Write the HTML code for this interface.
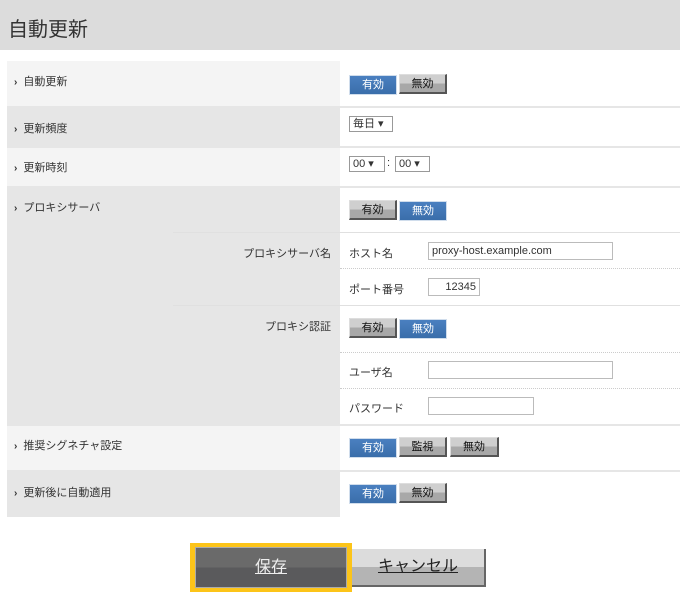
<!DOCTYPE html><html><head><meta charset="utf-8"><style>
*{margin:0;padding:0;box-sizing:border-box}
body{width:680px;height:601px;background:#fff;font-family:"Liberation Sans","Noto Sans CJK JP",sans-serif;font-size:11px;color:#333;position:relative;overflow:hidden}
.a{position:absolute}
.hd{left:0;top:0;width:680px;height:50px;background:#dcdcdc;font-size:20px;color:#333;padding:13px 0 0 8px}
.lt{left:7px;width:333px}
.l1{background:#f4f4f4}.l2{background:#e6e6e6}
.hl{height:2px;background:#e6e6e6;left:7px;width:673px}
.dl{height:0;border-top:1px dotted #ccc;left:340px;width:340px}
.lb{font-size:11px;color:#333}
.lb:before{content:"›";font-weight:bold;margin-right:6px;font-size:10px}
.b{position:absolute;height:20px;width:48px;text-align:center;line-height:19px;font-size:11px}
.bl{background:linear-gradient(#4a80c0,#3a6eaa);color:#fff;border:1px solid #d0ddec}
.bg{background:linear-gradient(#cfcfcf 50%,#a8a8a8 50%);color:#111;border-right:2px solid #555;border-bottom:2px solid #555;border-top:1px solid #ddd;border-left:1px solid #ddd}
.in{position:absolute;height:18px;border:1px solid #bbb;background:#fff;font-size:11px;padding:1px 3px;line-height:14px}
.sel{position:absolute;height:16px;border:1px solid #999;background:#fff;font-size:11px;padding:0 3px;line-height:14px}
.r{text-align:right}
</style></head><body>
<div class="a hd">自動更新</div>
<div class="a lt l1" style="top:61px;height:45px"></div>
<div class="a lt l2" style="top:107px;height:39px"></div>
<div class="a lt l1" style="top:147px;height:39px"></div>
<div class="a lt l2" style="top:187px;height:237px"></div>
<div class="a lt l1" style="top:425px;height:45px"></div>
<div class="a lt l2" style="top:471px;height:46px"></div>
<div class="a hl" style="top:106px"></div>
<div class="a hl" style="top:146px"></div>
<div class="a hl" style="top:186px"></div>
<div class="a hl" style="top:424px"></div>
<div class="a hl" style="top:470px"></div>
<div class="a" style="left:173px;top:232px;width:507px;height:1px;background:#e0e0e0"></div>
<div class="a" style="left:173px;top:305px;width:507px;height:1px;background:#e0e0e0"></div>
<div class="a dl" style="top:268px"></div>
<div class="a dl" style="top:352px"></div>
<div class="a dl" style="top:388px"></div>

<div class="a lb" style="left:14px;top:73px">自動更新</div>
<div class="a lb" style="left:14px;top:120px">更新頻度</div>
<div class="a lb" style="left:14px;top:159px">更新時刻</div>
<div class="a lb" style="left:14px;top:199px">プロキシサーバ</div>
<div class="a lb" style="left:14px;top:437px">推奨シグネチャ設定</div>
<div class="a lb" style="left:14px;top:484px">更新後に自動適用</div>
<div class="a r" style="left:180px;width:151px;top:245px">プロキシサーバ名</div>
<div class="a r" style="left:180px;width:151px;top:318px">プロキシ認証</div>
<div class="a" style="left:349px;top:245px">ホスト名</div>
<div class="a" style="left:349px;top:281px">ポート番号</div>
<div class="a" style="left:349px;top:364px">ユーザ名</div>
<div class="a" style="left:349px;top:400px">パスワード</div>

<div class="b bl" style="left:349px;top:75px">有効</div><div class="b bg" style="left:399px;top:74px">無効</div>
<div class="sel" style="left:349px;top:116px;width:44px">毎日 ▾</div>
<div class="sel" style="left:349px;top:156px;width:36px">00 ▾</div>
<div class="a" style="left:387px;top:157px">:</div>
<div class="sel" style="left:395px;top:156px;width:35px">00 ▾</div>
<div class="b bg" style="left:349px;top:200px">有効</div><div class="b bl" style="left:399px;top:201px">無効</div>
<div class="in" style="left:428px;top:242px;width:185px">proxy-host.example.com</div>
<div class="in r" style="left:428px;top:278px;width:52px">12345</div>
<div class="b bg" style="left:349px;top:318px">有効</div><div class="b bl" style="left:399px;top:319px">無効</div>
<div class="in" style="left:428px;top:361px;width:185px"></div>
<div class="in" style="left:428px;top:397px;width:106px"></div>
<div class="b bl" style="left:349px;top:438px">有効</div><div class="b bg" style="left:399px;top:437px">監視</div><div class="b bg" style="left:450px;top:437px;width:49px">無効</div>
<div class="b bl" style="left:349px;top:484px">有効</div><div class="b bg" style="left:399px;top:483px">無効</div>

<div class="a" style="left:190px;top:543px;width:162px;height:49px;background:#fcc419"></div>
<div class="a" style="left:195px;top:547px;width:152px;height:41px;background:linear-gradient(#6a6a6a 50%,#5a5a5c 50%);border:1px solid #aaa;color:#eee;font-size:16px;text-align:center;line-height:39px;text-decoration:underline">保存</div>
<div class="a" style="left:352px;top:549px;width:134px;height:38px;background:linear-gradient(#dcdcdc 50%,#b4b4b4 50%);border-right:2px solid #666;border-bottom:2px solid #666;color:#222;font-size:16px;text-align:center;line-height:36px;text-decoration:underline">キャンセル</div>
</body></html>
